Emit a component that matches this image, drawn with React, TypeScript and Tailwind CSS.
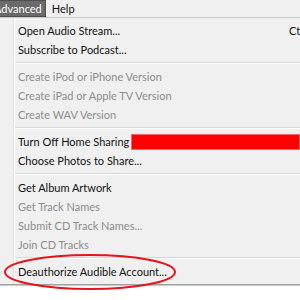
import React from 'react'

type Item = { label: string; disabled?: boolean; shortcut?: string; redact?: boolean }

const groups: Item[][] = [
  [{ label: 'Open Audio Stream...', shortcut: 'Ctrl+U' }, { label: 'Subscribe to Podcast...' }],
  [
    { label: 'Create iPod or iPhone Version', disabled: true },
    { label: 'Create iPad or Apple TV Version', disabled: true },
    { label: 'Create WAV Version', disabled: true },
  ],
  [{ label: 'Turn Off Home Sharing', redact: true }, { label: 'Choose Photos to Share...' }],
  [
    { label: 'Get Album Artwork' },
    { label: 'Get Track Names', disabled: true },
    { label: 'Submit CD Track Names...', disabled: true },
    { label: 'Join CD Tracks', disabled: true },
  ],
  [{ label: 'Deauthorize Audible Account...' }],
]

function MenuRow({ item }: { item: Item }) {
  return (
    <div className="h-[19px] flex items-center pl-[18px] whitespace-nowrap relative">
      <span className={item.disabled ? 'text-[#8d8d8d]' : 'text-[#111]'}>{item.label}</span>
      {item.redact && <div className="ml-[2px] h-[16px] flex-1 bg-[#ff0000] border border-[#f36a6a]" />}
      {item.shortcut && <span className="absolute left-[289px] text-[#111]">{item.shortcut}</span>}
    </div>
  )
}

export default function App() {
  return (
    <div
      className="w-[300px] h-[300px] overflow-hidden bg-white relative text-[11px] leading-none"
      style={{ fontFamily: 'Lato, "Noto Sans", sans-serif' }}
    >
      {/* menu bar */}
      <div className="h-[18px] bg-[#f0f0f0] border-b border-[#c9c9c9] flex items-stretch">
        <div className="bg-[#6a6a6a] border border-[#4f4f4f] text-white flex items-center pr-[3px] ml-[-8px] pl-[1px] h-[17px]">
          Advanced
        </div>
        <div className="flex items-center pl-[6px] text-[#111]">Help</div>
      </div>

      {/* dropdown */}
      <div className="bg-[#f0f0f0] border-b border-[#a0a0a0] shadow-[0_1px_0_#c8c8c8] relative pt-[3px] pb-[3px]">
        <div className="absolute left-[13px] top-0 bottom-0 w-[2px] border-l border-[#e2e2e2] border-r border-r-white" />
        {groups.map((g, i) => (
          <div key={i}>
            {i > 0 && (
              <div className="h-[8px] flex flex-col justify-center pl-[13px]">
                <div className="h-[1px] bg-[#d7d7d7]" />
                <div className="h-[1px] bg-white" />
              </div>
            )}
            {g.map((it) => (
              <MenuRow key={it.label} item={it} />
            ))}
          </div>
        ))}
      </div>

      {/* red annotation */}
      <svg className="absolute left-0 top-0" width="300" height="300">
        <ellipse cx="90" cy="272" rx="85" ry="17" fill="none" stroke="#e8141c" strokeWidth="2" />
      </svg>
    </div>
  )
}
